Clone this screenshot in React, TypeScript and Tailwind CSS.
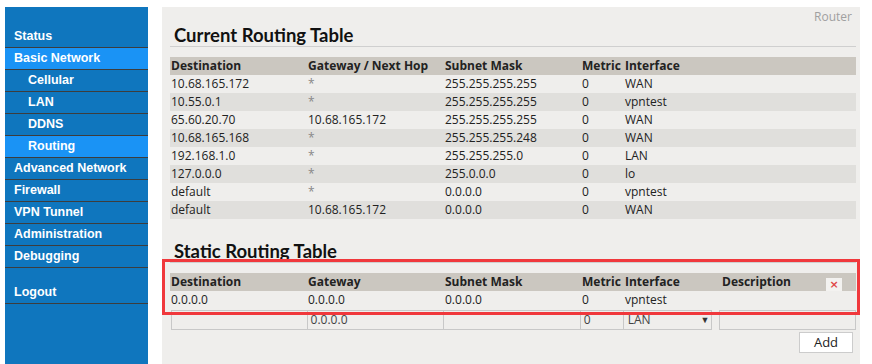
import React from 'react';

type Route = {
  dest: string;
  gateway: string;
  mask: string;
  metric: string;
  iface: string;
};

const routes: Route[] = [
  { dest: '10.68.165.172', gateway: '*', mask: '255.255.255.255', metric: '0', iface: 'WAN' },
  { dest: '10.55.0.1', gateway: '*', mask: '255.255.255.255', metric: '0', iface: 'vpntest' },
  { dest: '65.60.20.70', gateway: '10.68.165.172', mask: '255.255.255.255', metric: '0', iface: 'WAN' },
  { dest: '10.68.165.168', gateway: '*', mask: '255.255.255.248', metric: '0', iface: 'WAN' },
  { dest: '192.168.1.0', gateway: '*', mask: '255.255.255.0', metric: '0', iface: 'LAN' },
  { dest: '127.0.0.0', gateway: '*', mask: '255.0.0.0', metric: '0', iface: 'lo' },
  { dest: 'default', gateway: '*', mask: '0.0.0.0', metric: '0', iface: 'vpntest' },
  { dest: 'default', gateway: '10.68.165.172', mask: '0.0.0.0', metric: '0', iface: 'WAN' },
];

const menu: { label: string; sub?: boolean; active?: boolean }[] = [
  { label: 'Status' },
  { label: 'Basic Network', active: true },
  { label: 'Cellular', sub: true },
  { label: 'LAN', sub: true },
  { label: 'DDNS', sub: true },
  { label: 'Routing', sub: true, active: true },
  { label: 'Advanced Network' },
  { label: 'Firewall' },
  { label: 'VPN Tunnel' },
  { label: 'Administration' },
  { label: 'Debugging' },
];

function MenuItem({ label, sub, active }: { label: string; sub?: boolean; active?: boolean }) {
  return (
    <div
      className={`h-[22px] border-b border-[#3d3d3d] text-white font-bold text-[12.5px] leading-[21px] ${
        active ? 'bg-[#1a93f5]' : 'bg-[#0f76be]'
      } ${sub ? 'pl-[23px]' : 'pl-[9px]'}`}
    >
      {label}
    </div>
  );
}

function Sidebar() {
  return (
    <aside className="w-[143px] shrink-0 bg-[#0f76be] pt-[19px] ml-[5px]" style={{ fontFamily: '"Liberation Sans", Arial, sans-serif' }}>
      {menu.map((m, i) => (
        <MenuItem key={i} {...m} />
      ))}
      <div className="h-[14px]" />
      <MenuItem label="Logout" />
    </aside>
  );
}

const headingFont = { fontFamily: 'Lato, "Open Sans", sans-serif' };

export default function App() {
  return (
    <div className="relative w-[872px] h-[364px] bg-white flex pt-[7px] overflow-hidden">
      <Sidebar />
      <main
        className="ml-[14px] w-[698px] bg-[#efeeec] pl-[8px] pr-[4px] text-[12px] text-[#222]"
        style={{ fontFamily: '"Open Sans", "Noto Sans", sans-serif' }}
      >
        <div className="h-[18px] pt-[3px] text-right pr-[4px] text-[12px] leading-[14px] text-[#a0a0a0]">Router</div>
        <h2
          className="h-[22px] pl-[4px] text-[18.5px] font-bold leading-[20px] text-[#111] border-b border-[#cfcfcf]"
          style={headingFont}
        >
          Current Routing Table
        </h2>
        <table className="mt-[10px] w-[686px] border-collapse table-fixed">
          <colgroup>
            <col className="w-[137px]" />
            <col className="w-[137px]" />
            <col className="w-[137px]" />
            <col className="w-[43px]" />
            <col />
          </colgroup>
          <thead>
            <tr className="bg-[#cbc7c0] h-[18px] text-left">
              <th className="pl-px font-bold leading-[18px]">Destination</th>
              <th className="pl-px font-bold leading-[18px]">Gateway / Next Hop</th>
              <th className="pl-px font-bold leading-[18px]">Subnet Mask</th>
              <th className="pl-px font-bold leading-[18px]">Metric</th>
              <th className="pl-px font-bold leading-[18px]">Interface</th>
            </tr>
          </thead>
          <tbody>
            {routes.map((r, i) => (
              <tr key={i} className={`h-[18px] leading-[18px] ${i % 2 === 1 ? 'bg-[#e0dfdc]' : ''}`}>
                <td className="pl-px">{r.dest}</td>
                <td className={`pl-px ${r.gateway === '*' ? 'text-[#888]' : ''}`}>{r.gateway}</td>
                <td className="pl-px">{r.mask}</td>
                <td className="pl-px">{r.metric}</td>
                <td className="pl-px">{r.iface}</td>
              </tr>
            ))}
          </tbody>
        </table>

        <h2
          className="mt-[22px] h-[22px] pl-[4px] text-[18.5px] font-bold leading-[20px] text-[#111] border-b border-[#cfcfcf]"
          style={headingFont}
        >
          Static Routing Table
        </h2>
        <table className="mt-[10px] w-[686px] border-collapse table-fixed">
          <colgroup>
            <col className="w-[137px]" />
            <col className="w-[137px]" />
            <col className="w-[137px]" />
            <col className="w-[43px]" />
            <col className="w-[97px]" />
            <col />
          </colgroup>
          <thead>
            <tr className="bg-[#cbc7c0] h-[18px] text-left">
              <th className="pl-px font-bold leading-[18px]">Destination</th>
              <th className="pl-px font-bold leading-[18px]">Gateway</th>
              <th className="pl-px font-bold leading-[18px]">Subnet Mask</th>
              <th className="pl-px font-bold leading-[18px]">Metric</th>
              <th className="pl-px font-bold leading-[18px]">Interface</th>
              <th className="pl-px font-bold leading-[18px] relative">
                Description
                <span
                  className="absolute right-[14px] top-[5px] w-[16px] h-[13px] bg-[#f3f2f0] text-[#e04848] text-[11px] leading-[13px] text-center font-bold"
                  style={{ fontFamily: '"DejaVu Sans", sans-serif' }}
                >
                  ×
                </span>
              </th>
            </tr>
          </thead>
          <tbody>
            <tr className="h-[18px] leading-[18px]">
              <td className="pl-px">0.0.0.0</td>
              <td className="pl-px">0.0.0.0</td>
              <td className="pl-px">0.0.0.0</td>
              <td className="pl-px">0</td>
              <td className="pl-px">vpntest</td>
              <td />
            </tr>
          </tbody>
        </table>
        <div className="mt-[1px] flex h-[20px] text-[#444]">
          <div className="w-[137px] border border-[#c8c8c8] ml-[1px]" />
          <div className="w-[138px] -ml-px border border-[#c8c8c8] pl-[3px] leading-[18px]">0.0.0.0</div>
          <div className="w-[138px] -ml-px border border-[#c8c8c8]" />
          <div className="w-[44px] -ml-px border border-[#c8c8c8] pl-[3px] leading-[18px]">0</div>
          <div className="w-[90px] -ml-px border border-[#c8c8c8] pl-[4px] pr-[2px] leading-[18px] flex justify-between">
            <span>LAN</span>
            <span className="text-[9px] text-[#333]">▼</span>
          </div>
          <div className="w-[137px] ml-[7px] border border-[#c8c8c8]" />
        </div>
        <div className="mt-[2px] flex justify-end pr-[3px]">
          <button className="w-[54px] h-[21px] bg-white border border-[#cccccc] text-[13px] leading-[19px] text-[#222]">
            Add
          </button>
        </div>
      </main>
      <div className="absolute left-[162px] top-[259px] w-[698px] h-[56px] border-[3px] border-[#f0383c] pointer-events-none" />
    </div>
  );
}
